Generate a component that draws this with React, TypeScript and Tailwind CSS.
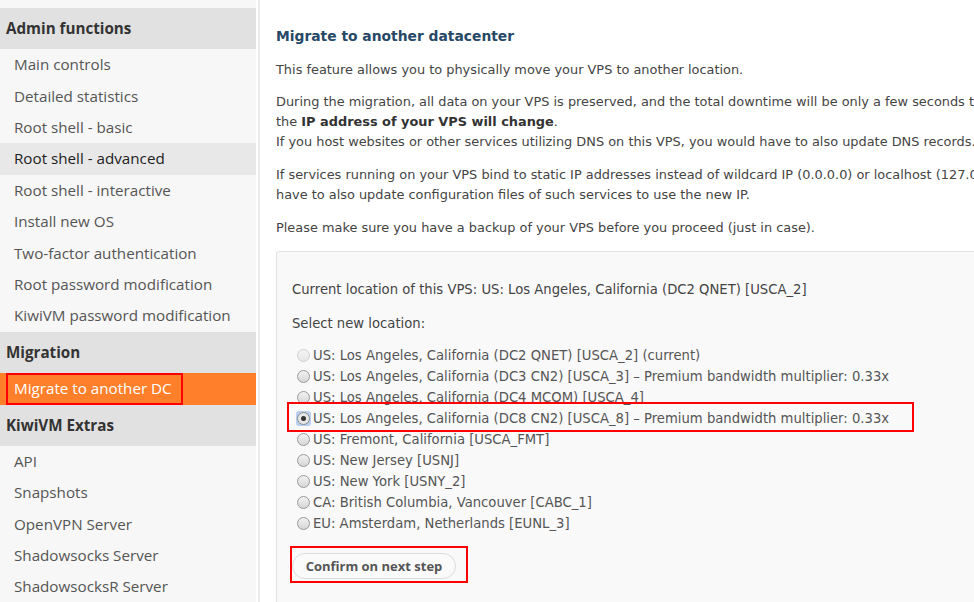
import React from "react";

const items1 = [
  "Main controls",
  "Detailed statistics",
  "Root shell - basic",
  "Root shell - advanced",
  "Root shell - interactive",
  "Install new OS",
  "Two-factor authentication",
  "Root password modification",
  "KiwiVM password modification",
];
const items3 = ["API", "Snapshots", "OpenVPN Server", "Shadowsocks Server", "ShadowsocksR Server"];

const locations = [
  "US: Los Angeles, California (DC2 QNET) [USCA_2] (current)",
  "US: Los Angeles, California (DC3 CN2) [USCA_3] \u2013 Premium bandwidth multiplier: 0.33x",
  "US: Los Angeles, California (DC4 MCOM) [USCA_4]",
  "US: Los Angeles, California (DC8 CN2) [USCA_8] \u2013 Premium bandwidth multiplier: 0.33x",
  "US: Fremont, California [USCA_FMT]",
  "US: New Jersey [USNJ]",
  "US: New York [USNY_2]",
  "CA: British Columbia, Vancouver [CABC_1]",
  "EU: Amsterdam, Netherlands [EUNL_3]",
];

function Header({ children }: { children: React.ReactNode }) {
  return (
    <div className="h-[41px] flex items-center pl-[6px] bg-[#e1e1e1] font-bold text-[#333] text-[15.2px]">
      {children}
    </div>
  );
}

function Item({ children, active }: { children: React.ReactNode; active?: boolean }) {
  return (
    <div
      className={
        "h-[31.4px] flex items-center pl-[14px] text-[15.2px] " +
        (active ? "bg-[#e8e8e8] text-[#222]" : "bg-[#f7f7f7] text-[#555]")
      }
    >
      {children}
    </div>
  );
}

function Radio({ state }: { state: "disabled" | "off" | "on" }) {
  if (state === "on") {
    return (
      <span className="w-[15px] h-[15px] flex items-center justify-center rounded-[3px] bg-[#b8cff0]">
        <span className="w-[13px] h-[13px] rounded-full border border-[#8a8a8a] bg-[#e6e6e6] flex items-center justify-center">
          <span className="w-[5px] h-[5px] rounded-full bg-[#333]" />
        </span>
      </span>
    );
  }
  return (
    <span className="w-[15px] h-[15px] flex items-center justify-center">
      <span
        className={
          "w-[13px] h-[13px] rounded-full border " +
          (state === "disabled"
            ? "border-[#d0d0d0] bg-gradient-to-b from-[#f4f4f4] to-[#e6e6e6]"
            : "border-[#9a9a9a] bg-gradient-to-b from-[#f2f2f2] to-[#d6d6d6]")
        }
      />
    </span>
  );
}

export default function App() {
  return (
    <div className="w-[974px] h-[602px] overflow-hidden flex bg-white">
      <aside className="w-[256px] shrink-0 bg-[#f7f7f7] font-['Open_Sans',sans-serif]">
        <div className="h-[8px] bg-[#f7f7f7]" />
        <Header>Admin functions</Header>
        {items1.map((t) => (
          <Item key={t} active={t === "Root shell - advanced"}>
            {t}
          </Item>
        ))}
        <Header>Migration</Header>
        <div className="relative h-[32px] flex items-center pl-[14px] text-[15.2px] bg-[#ff7f2a] text-white">
          Migrate to another DC
          <div className="absolute left-[6px] top-[0px] w-[177px] h-[32px] border-2 border-[#ff0000]" />
        </div>
        <Header>KiwiVM Extras</Header>
        {items3.map((t) => (
          <Item key={t}>{t}</Item>
        ))}
      </aside>
      <div className="w-[2px] shrink-0 bg-white" />
      <main className="flex-1 min-w-0 border-l-2 border-[#ececec] pl-[16px] pt-[26px] font-['DejaVu_Sans',Verdana,sans-serif] text-[12.9px] leading-[20px] text-[#444] whitespace-nowrap">
        <h1 className="text-[13.85px] font-bold text-[#274866] leading-[20px]">Migrate to another datacenter</h1>
        <p className="mt-[14px]">This feature allows you to physically move your VPS to another location.</p>
        <p className="mt-[12px]">
          During the migration, all data on your VPS is preserved, and the total downtime will be only a few seconds to complete. However,
          <br />
          the <b className="text-[#333]">IP address of your VPS will change</b>.
          <br />
          If you host websites or other services utilizing DNS on this VPS, you would have to also update DNS records.
        </p>
        <p className="mt-[13px]">
          If services running on your VPS bind to static IP addresses instead of wildcard IP (0.0.0.0) or localhost (127.0.0.1), you will
          <br />
          have to also update configuration files of such services to use the new IP.
        </p>
        <p className="mt-[13px]">Please make sure you have a backup of your VPS before you proceed (just in case).</p>
        <div className="relative mt-[13px] w-[900px] h-[400px] border border-[#e2e2e2] rounded-tl-[3px] bg-[#f9f9f9] pl-[15px] pt-[28px] text-[13.2px]">
          <div>Current location of this VPS: US: Los Angeles, California (DC2 QNET) [USCA_2]</div>
          <div className="mt-[14px]">Select new location:</div>
          <div className="mt-[11px] pl-[4px] text-[#555]">
            {locations.map((l, i) => (
              <div key={l} className="h-[21px] flex items-center gap-[2px]">
                <Radio state={i === 0 ? "disabled" : i === 3 ? "on" : "off"} />
                <span>{l}</span>
              </div>
            ))}
          </div>
          <button className="mt-[19px] h-[26px] w-[164px] rounded-full border border-[#dcdcdc] bg-[#fafafa] text-[13px] font-bold text-[#555] font-['Open_Sans',sans-serif] flex items-center justify-center">
            Confirm on next step
          </button>
          <div className="absolute left-[10px] top-[150px] w-[627px] h-[30px] border-2 border-[#ff0000]" />
          <div className="absolute left-[13px] top-[294px] w-[178px] h-[37px] border-2 border-[#ff0000]" />
        </div>
      </main>
    </div>
  );
}
